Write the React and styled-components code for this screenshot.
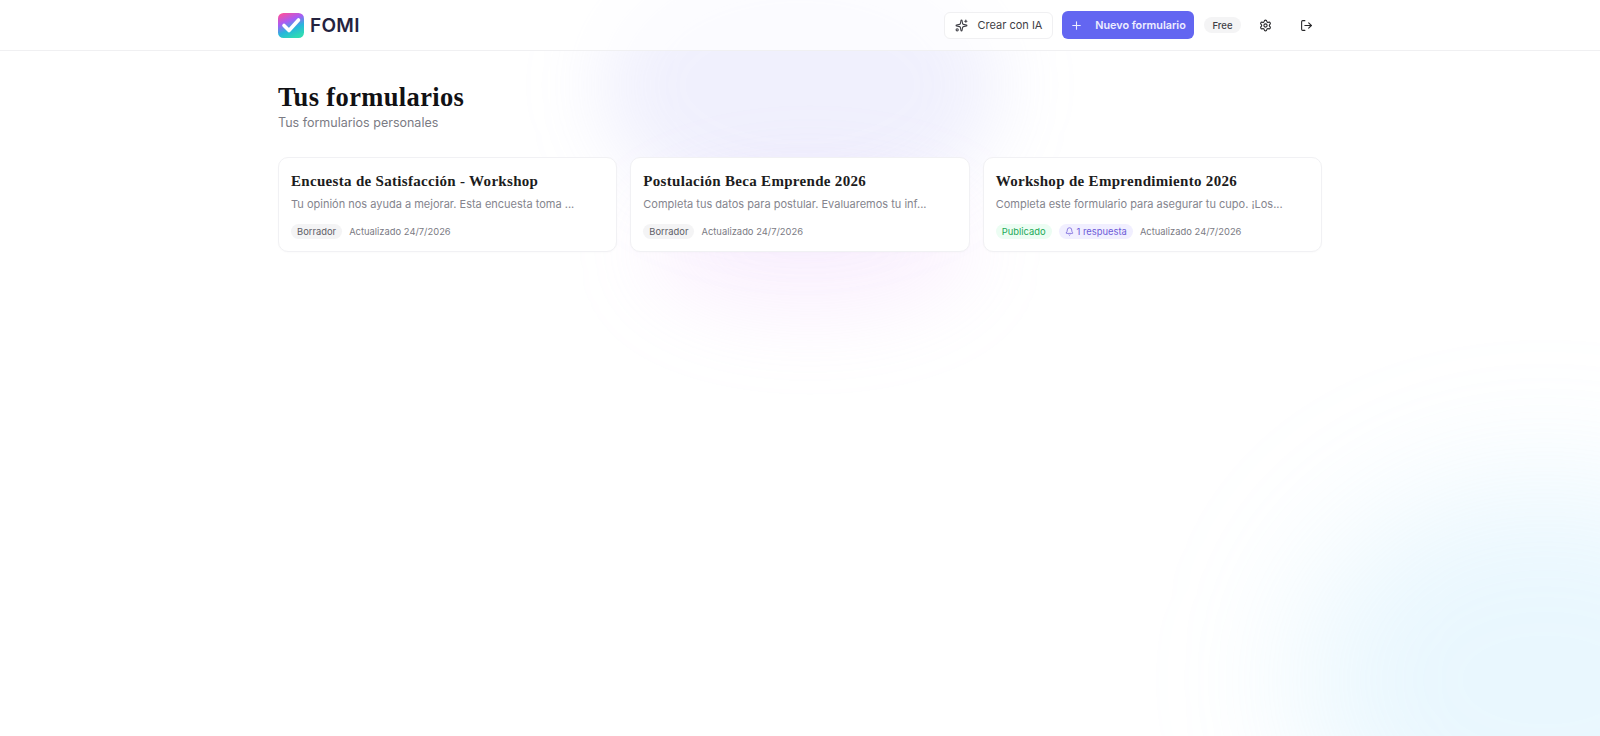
import React from "react";
import styled, { createGlobalStyle } from "styled-components";
import { Sparkles, Plus, Settings, LogOut, Bell } from "lucide-react";

const Global = createGlobalStyle`
  html, body { margin: 0; padding: 0; height: 100%; background: #fff; }
  body { font-family: Inter, "Liberation Sans", sans-serif; overflow: hidden; }
  * { box-sizing: border-box; }
`;
const Page = styled.div`
  position: relative; width: 100%; height: 736px; overflow: hidden; background: #fff;
`;
const Glow = styled.div`
  position: absolute; pointer-events: none; border-radius: 50%; filter: blur(${p => p.$blur}px);
  background: ${p => p.$color};
`;
const VioletGlow = styled(Glow)`left: 600px; top: -50px; width: 400px; height: 270px;`;
const PinkGlow = styled(Glow)`left: 645px; top: 180px; width: 330px; height: 140px;`;
const BlueGlow = styled(Glow)`left: 1295px; top: 480px; width: 500px; height: 400px;`;
const Content = styled.div`position: relative; z-index: 1;`;
const Header = styled.header`
  height: 51px; border-bottom: 1px solid #f0f0f2; background: rgba(255,255,255,.72);
  display: flex; justify-content: center;
`;
const Bar = styled.div`width: 1044px; display: flex; align-items: center; justify-content: space-between;`;
const Brand = styled.div`display: flex; align-items: center; gap: 6px;`;
const BrandName = styled.span`font-size: 19px; font-weight: 600; color: #25233f; letter-spacing: .3px;`;
const Actions = styled.div`display: flex; align-items: center; padding-right: 2px;`;
const GhostButton = styled.button`
  width: 109px; height: 27px; border-radius: 6px; border: 1px solid #f0f0f2; background: #fff;
  display: flex; align-items: center; justify-content: center; gap: 10px; color: #3f3f46;
  font: 400 11px Inter, sans-serif;
`;
const PrimaryButton = styled.button`
  width: 132px; height: 28px; margin-left: 9px; border-radius: 6px; border: 0; background: #6366f1;
  color: #eeeeff; display: flex; align-items: center; justify-content: center; gap: 12px;
  font: 600 10.8px Inter, sans-serif;
`;
const Plan = styled.span`
  width: 37px; height: 16px; margin-left: 10px; border-radius: 8px; background: #f4f4f5; color: #3f3f46;
  font-size: 9.5px; font-weight: 500; display: flex; align-items: center; justify-content: center;
`;
const IconBtn = styled.button`
  width: 28px; height: 28px; border: 0; background: transparent; padding: 0; color: #27272a;
  display: flex; align-items: center; justify-content: center; margin-left: ${p => p.$ml}px;
`;
const Main = styled.main`width: 1044px; margin: 0 auto; padding-top: 31px;`;
const Title = styled.h1`
  margin: 0; font: 700 26.5px/30px "Liberation Serif", serif; color: #111114; letter-spacing: .36px;
`;
const Subtitle = styled.p`margin: 1px 0 0; font-size: 12.5px; line-height: 20px; color: #7b7b84;`;
const Grid = styled.div`display: grid; grid-template-columns: repeat(3, 1fr); gap: 13px; margin-top: 24px;`;
const Card = styled.article`
  height: 95px; padding: 14px 12px 0; background: #fff; border: 1px solid #f1f1f4; border-radius: 10px;
  box-shadow: 0 1px 2px rgba(20,20,40,.02);
`;
const CardTitle = styled.h2`
  margin: 0; font: 700 15px/19px "Liberation Serif", serif; color: #1c1c20; letter-spacing: .31px;
  white-space: nowrap;
`;
const CardText = styled.p`margin: 5px 0 0; font-size: 11px; line-height: 16px; color: #85858e; white-space: nowrap;`;
const Meta = styled.div`display: flex; align-items: center; gap: 7px; margin-top: 12px;`;
const Badge = styled.span`
  height: 15px; padding: 0 6px; border-radius: 8px; font-size: 9.4px; font-weight: 400;
  display: inline-flex; align-items: center; gap: 3px;
  background: ${p => p.$bg}; color: ${p => p.$fg};
`;
const Updated = styled.span`font-size: 9.4px; color: #7b7b84;`;

const Logo = () => (
  <svg width="26" height="25" viewBox="0 0 26 25">
    <defs>
      <linearGradient id="lg" x1="0.15" y1="0" x2="0.6" y2="1">
        <stop offset="0" stopColor="#ff4f9a" />
        <stop offset=".36" stopColor="#a85cf5" />
        <stop offset=".68" stopColor="#27b6dc" />
        <stop offset="1" stopColor="#2fdab4" />
      </linearGradient>
    </defs>
    <rect width="26" height="25" rx="5.5" fill="url(#lg)" />
    <path d="M6 12.5l5 5L20.5 7" fill="none" stroke="#fff" strokeWidth="3.6" strokeLinecap="round" strokeLinejoin="round" />
  </svg>
);

const forms = [
  { title: "Encuesta de Satisfacción - Workshop", text: "Tu opinión nos ayuda a mejorar. Esta encuesta toma ..." },
  { title: "Postulación Beca Emprende 2026", text: "Completa tus datos para postular. Evaluaremos tu inf..." },
  { title: "Workshop de Emprendimiento 2026", text: "Completa este formulario para asegurar tu cupo. ¡Los...", published: true },
];

export default function App() {
  return (
    <Page>
      <Global />
      <VioletGlow $blur={38} $color="rgba(165,165,245,.17)" />
      <PinkGlow $blur={38} $color="rgba(225,170,245,.15)" />
      <BlueGlow $blur={70} $color="rgba(140,215,250,.19)" />
      <Content>
        <Header>
          <Bar>
            <Brand><Logo /><BrandName>FOMI</BrandName></Brand>
            <Actions>
              <GhostButton><Sparkles size={13} />Crear con IA</GhostButton>
              <PrimaryButton><Plus size={13} />Nuevo formulario</PrimaryButton>
              <Plan>Free</Plan>
              <IconBtn $ml={10}><Settings size={13} /></IconBtn>
              <IconBtn $ml={13}><LogOut size={13} /></IconBtn>
            </Actions>
          </Bar>
        </Header>
        <Main>
          <Title>Tus formularios</Title>
          <Subtitle>Tus formularios personales</Subtitle>
          <Grid>
            {forms.map(f => (
              <Card key={f.title}>
                <CardTitle>{f.title}</CardTitle>
                <CardText>{f.text}</CardText>
                <Meta>
                  {f.published
                    ? <Badge $bg="#ecfdf3" $fg="#22a957">Publicado</Badge>
                    : <Badge $bg="#f4f4f5" $fg="#5f5f68">Borrador</Badge>}
                  {f.published && <Badge $bg="#f1efff" $fg="#6d5bd8"><Bell size={9} />1 respuesta</Badge>}
                  <Updated>Actualizado 24/7/2026</Updated>
                </Meta>
              </Card>
            ))}
          </Grid>
        </Main>
      </Content>
    </Page>
  );
}
